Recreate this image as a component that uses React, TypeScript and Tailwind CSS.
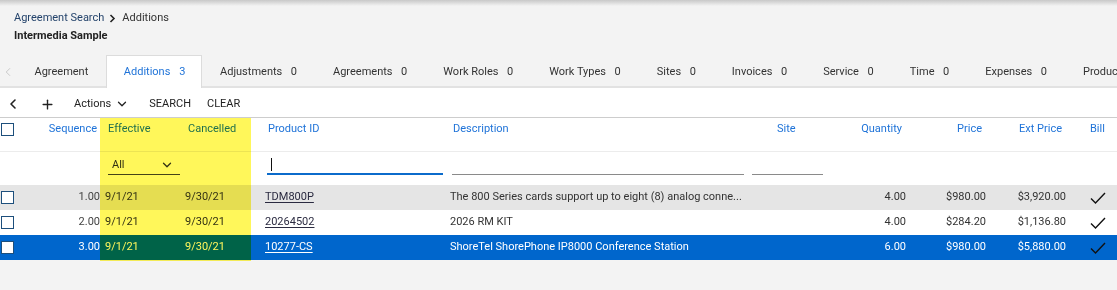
import { ChevronLeft, ChevronDown, Plus } from 'lucide-react';

const tabs = [
  { label: 'Agreement' },
  { label: 'Additions', count: 3, active: true },
  { label: 'Adjustments', count: 0 },
  { label: 'Agreements', count: 0 },
  { label: 'Work Roles', count: 0 },
  { label: 'Work Types', count: 0 },
  { label: 'Sites', count: 0 },
  { label: 'Invoices', count: 0 },
  { label: 'Service', count: 0 },
  { label: 'Time', count: 0 },
  { label: 'Expenses', count: 0 },
  { label: 'Products' },
];

const rows = [
  {
    seq: '1.00',
    eff: '9/1/21',
    can: '9/30/21',
    pid: 'TDM800P',
    desc: 'The 800 Series cards support up to eight (8) analog conne...',
    qty: '4.00',
    price: '$980.00',
    ext: '$3,920.00',
    tone: 'gray',
  },
  {
    seq: '2.00',
    eff: '9/1/21',
    can: '9/30/21',
    pid: '20264502',
    desc: '2026 RM KIT',
    qty: '4.00',
    price: '$284.20',
    ext: '$1,136.80',
    tone: 'white',
  },
  {
    seq: '3.00',
    eff: '9/1/21',
    can: '9/30/21',
    pid: '10277-CS',
    desc: 'ShoreTel ShorePhone IP8000 Conference Station',
    qty: '6.00',
    price: '$980.00',
    ext: '$5,880.00',
    tone: 'selected',
  },
];

const cols =
  'grid grid-cols-[40px_62px_81px_75px_187px_303px_82px_78px_80px_80px_1fr]';

const Box = () => (
  <div className="w-[13px] h-[13px] bg-white border-[1.5px] border-[#1d4f7c]" />
);

const Tick = () => (
  <svg width="16" height="12" viewBox="0 0 16 12" fill="none">
    <path d="M1 6.5 L5.5 11 L15 1" stroke="#111" strokeWidth="1.4" />
  </svg>
);

const App = () => {
  return (
    <div className="w-[1117px] h-[290px] overflow-hidden bg-[#f3f3f3] font-['Roboto',_sans-serif] text-[11px] text-[#333]">
      <div className="h-[6px] bg-gradient-to-b from-[#c8c8c8] to-[#f3f3f3]" />

      {/* breadcrumb */}
      <div className="mt-[5px] pl-[14px] h-[14px] leading-[14px] flex items-center">
        <span className="text-[#24436b]">Agreement Search</span>
        <svg width="7" height="9" viewBox="0 0 7 9" className="ml-[5px] mr-[6px]">
          <path d="M1.5 1 L5 4.5 L1.5 8" stroke="#222" strokeWidth="1.6" fill="none" />
        </svg>
        <span className="text-[#333]">Additions</span>
      </div>
      <div className="mt-[4px] pl-[14px] h-[14px] leading-[14px] font-bold text-[#222]">
        Intermedia Sample
      </div>

      {/* tabs */}
      <div className="mt-[12px] h-[33px] flex items-start border-b-2 border-[#e2e2e2]">
        <div className="w-[16px] shrink-0 h-[31px] flex items-center pl-[1px] pt-[3px]">
          <ChevronLeft className="w-[14px] h-[18px] text-[#c2c2c2]" strokeWidth={1.5} />
        </div>
        {tabs.map((t) => (
          <div
            key={t.label}
            className={
              t.active
                ? 'relative h-[33px] -mb-[2px] pt-[3px] pb-[2px] pl-[17px] pr-[15px] flex items-center gap-[9px] bg-white border border-b-0 border-[#dcdcdc] text-[#1f73d8] whitespace-nowrap'
                : 'h-[31px] pt-[3px] pl-[18.5px] pr-[17.5px] flex items-center gap-[8.6px] whitespace-nowrap'
            }
          >
            <span>{t.label}</span>
            {t.count !== undefined && <span>{t.count}</span>}
          </div>
        ))}
      </div>

      {/* toolbar */}
      <div className="h-[29px] pt-[3px] bg-white flex items-center text-[#222]">
        <ChevronLeft className="ml-[5px] w-[16px] h-[16px]" strokeWidth={2.4} />
        <Plus className="ml-[19px] w-[15px] h-[15px]" strokeWidth={2.2} />
        <span className="ml-[19px]">Actions</span>
        <ChevronDown className="ml-[4px] w-[14px] h-[14px]" strokeWidth={2.2} />
        <span className="ml-[20px]">SEARCH</span>
        <span className="ml-[16px]">CLEAR</span>
      </div>

      {/* table */}
      <div className="relative border-t border-[#cdcdcd]">
        <div className={`${cols} h-[34px] bg-white border-b border-[#ececec] text-[#1f73d8]`}>
          <div className="pl-[1px] pt-[5px]">
            <Box />
          </div>
          <div className="pt-[3px] pr-[5px] text-right">Sequence</div>
          <div className="pt-[3px] pl-[6px]">Effective</div>
          <div className="pt-[3px] pl-[5px]">Cancelled</div>
          <div className="pt-[3px] pl-[10px]">Product ID</div>
          <div className="pt-[3px] pl-[8px]">Description</div>
          <div className="pt-[3px] pl-[29px]">Site</div>
          <div className="pt-[3px] pr-[6px] text-right">Quantity</div>
          <div className="pt-[3px] pr-[6px] text-right">Price</div>
          <div className="pt-[3px] pr-[6px] text-right">Ext Price</div>
          <div className="pt-[3px] pl-[22px]">Bill</div>
        </div>

        {/* filters */}
        <div className={`${cols} h-[33px] bg-white`}>
          <div />
          <div />
          <div className="pl-[6px] pr-[3px] pt-[4px]">
            <div className="h-[19px] border-b border-[#444] flex items-center justify-between pl-[4px] pr-[6px] text-[#333]">
              <span>All</span>
              <ChevronDown className="w-[14px] h-[14px]" strokeWidth={2.2} />
            </div>
          </div>
          <div />
          <div className="pl-[9px] pr-[2px] pt-[4px]">
            <div className="h-[19px] border-b-2 border-[#0b6bcb] flex items-center pl-[4px]">
              <div className="w-[1px] h-[13px] bg-[#111]" />
            </div>
          </div>
          <div className="pl-[7px] pr-[4px] pt-[4px]">
            <div className="h-[19px] border-b border-[#8a8a8a]" />
          </div>
          <div className="pl-[4px] pr-[7px] pt-[4px]">
            <div className="h-[19px] border-b border-[#8a8a8a]" />
          </div>
          <div />
          <div />
          <div />
          <div />
        </div>

        {/* rows */}
        {rows.map((r) => {
          const sel = r.tone === 'selected';
          const bg =
            r.tone === 'gray' ? 'bg-[#e5e5e5]' : sel ? 'bg-[#0066cc] text-white' : 'bg-white';
          return (
            <div key={r.seq} className={`${cols} h-[25px] items-center ${bg}`}>
              <div className="pl-[1px] flex items-center">
                <Box />
              </div>
              <div className={`pr-[2px] text-right ${sel ? '' : 'text-[#444]'}`}>{r.seq}</div>
              <div className="pl-[3px]">{r.eff}</div>
              <div className="pl-[2px]">{r.can}</div>
              <div className="pl-[7px]">
                <span className={`underline underline-offset-2 ${sel ? '' : 'text-[#2a2a40]'}`}>{r.pid}</span>
              </div>
              <div className="pl-[5px] whitespace-nowrap overflow-hidden">{r.desc}</div>
              <div />
              <div className="pr-[2px] text-right">{r.qty}</div>
              <div className="pr-[2px] text-right">{r.price}</div>
              <div className="pr-[2px] text-right">{r.ext}</div>
              <div className="pl-[22px] flex items-center">
                <Tick />
              </div>
            </div>
          );
        })}

        {/* highlighter marks over Effective / Cancelled */}
        <div className="absolute left-[100px] top-0 w-[151px] h-[143px] bg-[#fff75a] mix-blend-multiply pointer-events-none" />
      </div>
    </div>
  );
};

export default App;
